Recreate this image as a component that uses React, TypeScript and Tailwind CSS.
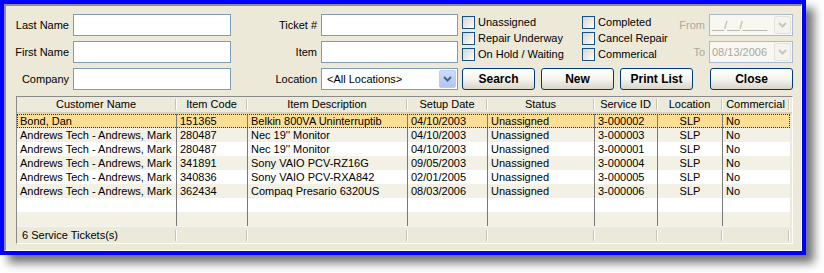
import React from "react";

const Chevron = ({ color }: { color: string }) => (
  <svg width="9" height="6" viewBox="0 0 9 6">
    <polyline points="1,1 4.5,4.5 8,1" fill="none" stroke={color} strokeWidth="2" />
  </svg>
);

const TextBox = ({ w }: { w: string }) => (
  <div className={"h-[22px] border border-[#7f9db9] bg-white " + w} />
);

const Check = ({ label }: { label: string }) => (
  <div className="flex items-center h-[16px]">
    <div className="w-[13px] h-[13px] border border-[#1c5180] bg-linear-to-br from-[#d6d5cd] to-white" />
    <span className="ml-[3px] whitespace-nowrap">{label}</span>
  </div>
);

const Btn = ({ label, w }: { label: string; w: string }) => (
  <button
    type="button"
    className={
      "h-[22px] rounded-[3px] border border-[#003c74] bg-linear-to-b from-white via-[#f5f4ef] to-[#d9d4c9] flex items-center justify-center font-bold text-[12px] text-black " +
      w
    }
  >
    {label}
  </button>
);

const DateBox = ({ text }: { text: string }) => (
  <div className="w-[84px] h-[22px] border border-[#a9bbd3] bg-[#f8f7f2] flex items-center">
    <span className="ml-[2px] flex-1 text-[#aca899]">{text}</span>
    <div className="w-[17px] h-[18px] mr-[1px] rounded-[2px] bg-[#f4f3ee] border border-[#e4e2d8] flex items-center justify-center">
      <Chevron color="#c9c7ba" />
    </div>
  </div>
);

const cols = [
  { name: "Customer Name", w: "w-[160px]", center: false },
  { name: "Item Code", w: "w-[71px]", center: false },
  { name: "Item Description", w: "w-[160px]", center: false },
  { name: "Setup Date", w: "w-[80px]", center: false },
  { name: "Status", w: "w-[107px]", center: false },
  { name: "Service ID", w: "w-[63px]", center: false },
  { name: "Location", w: "w-[65px]", center: true },
  { name: "Commercial", w: "w-[67px]", center: false },
];

const rows = [
  ["Bond, Dan", "151365", "Belkin 800VA Uninterruptib", "04/10/2003", "Unassigned", "3-000002", "SLP", "No"],
  ["Andrews Tech - Andrews, Mark", "280487", "Nec 19'' Monitor", "04/10/2003", "Unassigned", "3-000003", "SLP", "No"],
  ["Andrews Tech - Andrews, Mark", "280487", "Nec 19'' Monitor", "04/10/2003", "Unassigned", "3-000001", "SLP", "No"],
  ["Andrews Tech - Andrews, Mark", "341891", "Sony VAIO PCV-RZ16G", "09/05/2003", "Unassigned", "3-000004", "SLP", "No"],
  ["Andrews Tech - Andrews, Mark", "340836", "Sony VAIO PCV-RXA842", "02/01/2005", "Unassigned", "3-000005", "SLP", "No"],
  ["Andrews Tech - Andrews, Mark", "362434", "Compaq Presario 6320US", "08/03/2006", "Unassigned", "3-000006", "SLP", "No"],
  ["", "", "", "", "", "", "", ""],
  ["", "", "", "", "", "", "", ""],
];

const Separator = () => (
  <div className="flex h-[11px] shrink-0">
    <div className="w-px bg-[#c7c5b2]" />
    <div className="w-px bg-white" />
  </div>
);

export default function App() {
  return (
    <div className="w-[824px] h-[273px] bg-white text-[11px] text-black font-['Liberation_Sans',Arial,sans-serif] leading-none">
      <div className="w-[806px] h-[255px] border-4 border-[#0000ff] shadow-[8px_8px_9px_rgba(0,0,0,0.55)]">
        <div className="h-full border-t-2 border-l-2 border-t-[#8e8e8e] border-l-[#8e8e8e] border-b border-r border-b-white border-r-white bg-[#ece9d8]">
          {/* form */}
          <div className="flex pt-[8px]">
            {/* col A */}
            <div className="w-[225px] flex flex-col gap-[5px]">
              {["Last Name", "First Name", "Company"].map((l) => (
                <div key={l} className="flex items-center h-[22px]">
                  <span className="w-[63px] text-right">{l}</span>
                  <div className="ml-[4px]">
                    <TextBox w="w-[158px]" />
                  </div>
                </div>
              ))}
            </div>
            {/* col B */}
            <div className="w-[227px] flex flex-col gap-[5px]">
              {["Ticket #", "Item"].map((l) => (
                <div key={l} className="flex items-center h-[22px]">
                  <span className="w-[86px] text-right">{l}</span>
                  <div className="ml-[4px]">
                    <TextBox w="w-[137px]" />
                  </div>
                </div>
              ))}
              <div className="flex items-center h-[22px]">
                <span className="w-[86px] text-right">Location</span>
                <div className="ml-[4px] w-[137px] h-[22px] border border-[#7f9db9] bg-white flex items-center">
                  <span className="ml-[5px] flex-1">{"<All Locations>"}</span>
                  <div className="w-[17px] h-[18px] mr-[1px] rounded-[2px] border border-[#b9cdf6] bg-linear-to-b from-[#cddcfc] to-[#b0c4f3] flex items-center justify-center">
                    <Chevron color="#4d6185" />
                  </div>
                </div>
              </div>
            </div>
            {/* col C */}
            <div className="ml-[4px] w-[331px] flex flex-col">
              <div className="h-[54px] flex">
                <div className="w-[121px] flex flex-col">
                  <Check label="Unassigned" />
                  <Check label="Repair Underway" />
                  <Check label="On Hold / Waiting" />
                </div>
                <div className="w-[98px] flex flex-col">
                  <Check label="Completed" />
                  <Check label="Cancel Repair" />
                  <Check label="Commerical" />
                </div>
                <div className="flex-1 flex flex-col gap-[5px]">
                  <div className="flex items-center h-[22px]">
                    <span className="flex-1 text-right text-[#aca899]">From</span>
                    <div className="ml-[4px]">
                      <DateBox text="__/__/____" />
                    </div>
                  </div>
                  <div className="flex items-center h-[22px]">
                    <span className="flex-1 text-right text-[#aca899]">To</span>
                    <div className="ml-[4px]">
                      <DateBox text="08/13/2006" />
                    </div>
                  </div>
                </div>
              </div>
              <div className="flex">
                <Btn label="Search" w="w-[73px]" />
                <div className="ml-[6px]">
                  <Btn label="New" w="w-[73px]" />
                </div>
                <div className="ml-[6px]">
                  <Btn label="Print List" w="w-[73px]" />
                </div>
                <div className="ml-[17px]">
                  <Btn label="Close" w="w-[83px]" />
                </div>
              </div>
            </div>
          </div>

          {/* grid */}
          <div className="mt-[6px] ml-[10px] w-[777px] h-[148px] border border-t-[#8a8a8a] border-l-[#8a8a8a] border-b-white border-r-white bg-[#ece9d8] flex flex-col">
            {/* header */}
            <div className="h-[17px] flex items-end pb-[1px] bg-[#ebeadb] border-b-2 border-[#d6d2c2]">
              {cols.map((c) => (
                <div key={c.name} className={"flex items-center h-[13px] " + c.w}>
                  <span className="flex-1 text-center whitespace-nowrap">{c.name}</span>
                  <Separator />
                </div>
              ))}
            </div>
            {/* rows */}
            {rows.map((r, i) => {
              const bg =
                i === 0
                  ? "bg-[#fedd95] outline outline-1 outline-dotted outline-[#333] -outline-offset-1"
                  : i % 2 === 1
                  ? "bg-[#f3f1e6]"
                  : "bg-white";
              return (
                <div key={i} className={"flex h-[14px] w-[773px] " + bg}>
                  {cols.map((c, j) => (
                    <div
                      key={j}
                      className={
                        "h-[14px] leading-[15px] px-[3px] overflow-hidden whitespace-nowrap " +
                        c.w +
                        (j < cols.length - 1 ? " border-r border-[#7a7a7a]" : "") +
                        (c.center ? " text-center" : "")
                      }
                    >
                      {r[j]}
                    </div>
                  ))}
                </div>
              );
            })}
            {/* footer */}
            <div className="flex-1 flex bg-[#ebe9da] border-t border-[#f4f3ec]">
              {cols.map((c, j) => (
                <div key={j} className={"flex items-center " + c.w}>
                  <span className="flex-1 pl-[5px] whitespace-nowrap">
                    {j === 0 ? "6 Service Tickets(s)" : ""}
                  </span>
                  <Separator />
                </div>
              ))}
            </div>
          </div>
        </div>
      </div>
    </div>
  );
}
